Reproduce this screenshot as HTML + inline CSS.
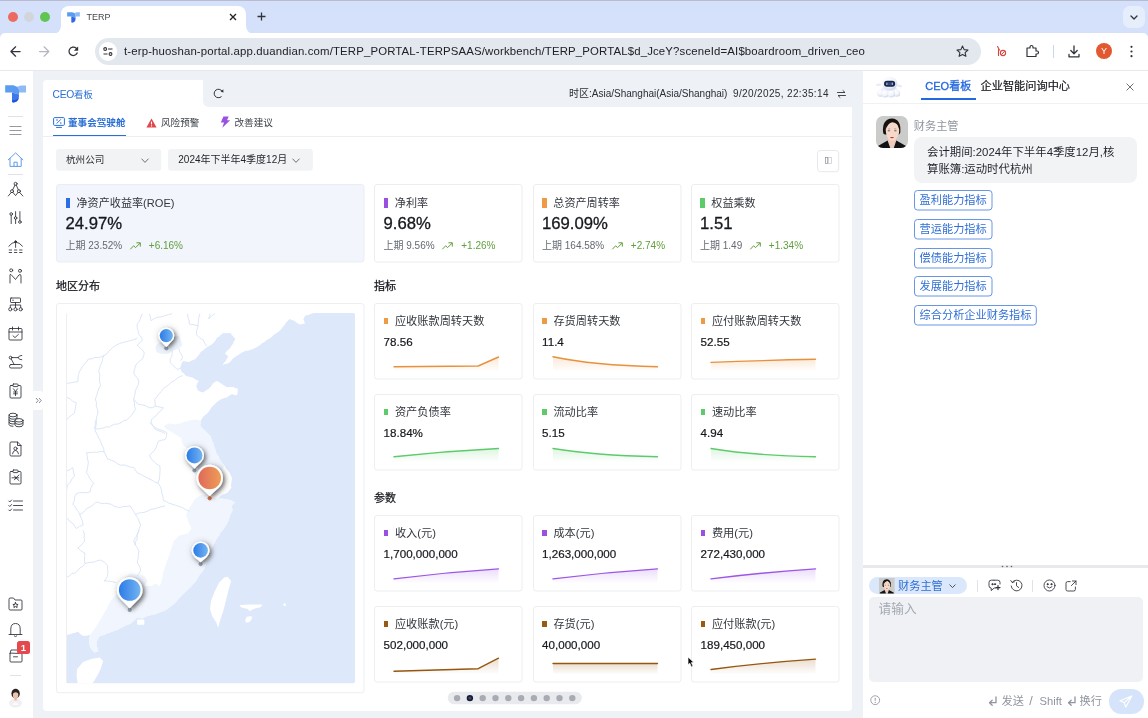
<!DOCTYPE html>
<html lang="zh-CN">
<head>
<meta charset="utf-8">
<title>TERP</title>
<style>
*{box-sizing:border-box;margin:0;padding:0}
html,body{width:1148px;height:718px;overflow:hidden;background:#fff}
body{font-family:"Liberation Sans","Noto Sans CJK SC",sans-serif;font-size:10px;color:#1f2329;position:relative;-webkit-font-smoothing:antialiased}
.abs{position:absolute}
svg{display:block;overflow:visible}
.ic{fill:none;stroke:#2b2f36;stroke-width:.85;stroke-linecap:round;stroke-linejoin:round}
/* browser chrome */
#tabbar{left:0;top:0;width:1148px;height:44px;background:#d5e1fb;border-top:1px solid #b9bccf}
#tab{left:60.7px;top:6px;width:185.3px;height:28px;background:#fff;border-radius:8px 8px 0 0}
#toolbar{left:0;top:33px;width:1148px;height:38px;background:#fff;border-bottom:1px solid #e6e8ec;border-radius:5px 5px 0 0}
#url{left:95px;top:38px;width:886px;height:27px;border-radius:14px;background:#e3e7ee}
#url span{position:absolute;left:29px;top:6.9px;font-size:11.4px;color:#202124;white-space:nowrap;letter-spacing:0.15px}
/* app */
#side{left:0;top:71px;width:33px;height:647px;background:#fff}
#mainbg{left:33px;top:71px;width:830px;height:647px;background:#eef1f6}
#panel{left:43px;top:107px;width:810px;height:603px;background:#fff;border-radius:0 0 4px 4px}
#ptab{left:43px;top:80px;width:160px;height:28px;background:#fff;border-radius:4px 4px 0 0}
#ptabrest{left:203px;top:80px;width:650px;height:27px;background:#f2f4f8;border-radius:0 4px 0 0}
.card{position:absolute;border:1px solid #ebedf0;border-radius:3px;background:#fff}
.t{position:absolute;white-space:nowrap;line-height:1}
.sel{position:absolute;height:22px;background:#f2f3f5;border-radius:3px}
.g{color:#5f9e3a}
.mut{color:#646a73}
#right{left:863px;top:70px;width:285px;height:648px;background:#fff;border-left:3px solid #eef1f6}
.chip{position:absolute;height:18px;border:1px solid transparent;border-radius:3px;color:#2f6fd6;font-size:11.2px;line-height:19.3px;padding:0 4.6px;white-space:nowrap}
.val{-webkit-text-stroke:.3px #15181d}
.mv{-webkit-text-stroke:.2px #15181d}
</style>
</head>
<body><div id="root" style="position:absolute;left:0;top:0;width:1148px;height:718px;will-change:transform">
<!-- ===== browser chrome ===== -->
<div id="tabbar" class="abs"></div>
<div id="tab" class="abs"></div>
<svg class="abs" style="left:52.7px;top:26px" width="8" height="8"><path d="M8,0 V8 H0 A8,8 0 0 0 8,0Z" fill="#fff"/></svg>
<svg class="abs" style="left:246px;top:26px" width="8" height="8"><path d="M0,0 V8 H8 A8,8 0 0 1 0,0Z" fill="#fff"/></svg>
<div class="abs" style="left:8px;top:12px;width:10px;height:10px;border-radius:50%;background:#ed6a5e"></div>
<div class="abs" style="left:24px;top:12px;width:10px;height:10px;border-radius:50%;background:#d2d5db"></div>
<div class="abs" style="left:40px;top:12px;width:10px;height:10px;border-radius:50%;background:#61c554"></div>
<svg class="abs" style="left:66.5px;top:12px" width="13.2" height="11" viewBox="0 0 21.5 18"><path d="M0.2,0.3 H8.5 L12,1.8 Q14,2.6 14,5 V9.5 L7,7.4 H0.2Z" fill="#5b9cf1"/><path d="M12,1.8 L16,0.5 H21 V7.4 H14 V5 Q14,2.6 12,1.8Z" fill="#8ebaf6"/><path d="M7,7.4 L14,9.5 V11 Q14,17 8.5,17.5 Q7,17.5 7,16.5Z" fill="#2f68e6"/></svg>
<div class="t" style="left:86.5px;top:12.8px;font-size:9px;color:#45484d">TERP</div>
<svg class="abs" style="left:229px;top:13px" width="8" height="8"><path d="M1,1 L7,7 M7,1 L1,7" stroke="#202124" stroke-width="1.3" fill="none"/></svg>
<svg class="abs" style="left:257px;top:12px" width="9" height="9"><path d="M4.5,0.5 V8.5 M0.5,4.5 H8.5" stroke="#30343a" stroke-width="1.3" fill="none"/></svg>
<div class="abs" style="left:1123px;top:6.3px;width:21.8px;height:21.8px;border-radius:7px;background:#e6eefc"></div>
<svg class="abs" style="left:1130px;top:14.5px" width="8" height="6"><path d="M1,1 L4,4 L7,1" stroke="#30343a" stroke-width="1.3" fill="none" stroke-linecap="round" stroke-linejoin="round"/></svg>
<div id="toolbar" class="abs"></div>
<svg class="abs" style="left:10.3px;top:46px" width="11" height="11"><path d="M10.1,5.5 H1 M5.6,0.8 L0.9,5.5 L5.6,10.2" stroke="#30343a" stroke-width="1.25" fill="none" stroke-linecap="round" stroke-linejoin="round"/></svg>
<svg class="abs" style="left:38.6px;top:46px" width="11" height="11"><path d="M0.6,5.5 H9.7 M5.1,0.8 L9.8,5.5 L5.1,10.2" stroke="#b4b8be" stroke-width="1.25" fill="none" stroke-linecap="round" stroke-linejoin="round"/></svg>
<svg class="abs" style="left:66.1px;top:44.2px" width="14.6" height="14.6" viewBox="0 0 24 24"><path d="M17.65 6.35A7.958 7.958 0 0 0 12 4c-4.42 0-7.99 3.58-7.99 8s3.57 8 7.99 8c3.73 0 6.84-2.55 7.73-6h-2.08A5.99 5.99 0 0 1 12 18c-3.31 0-6-2.69-6-6s2.69-6 6-6c1.66 0 3.14.69 4.22 1.78L13 11h7V4l-2.35 2.35z" fill="#30343a"/></svg>
<div id="url" class="abs"><span>t-erp-huoshan-portal.app.duandian.com/TERP_PORTAL-TERPSAAS/workbench/TERP_PORTAL$d_JceY?sceneId=AI$boardroom_driven_ceo</span></div>
<div class="abs" style="left:98.6px;top:42.3px;width:18.4px;height:18.4px;border-radius:50%;background:#fff"></div>
<svg class="abs" style="left:103.2px;top:47px" width="10" height="9" viewBox="0 0 10 9"><circle cx="2.2" cy="2" r="1.4" fill="none" stroke="#30343a" stroke-width="1.1"/><path d="M5,2 H9.5 M0.5,7 H4.5" stroke="#30343a" stroke-width="1.1"/><circle cx="7.5" cy="7" r="1.4" fill="none" stroke="#30343a" stroke-width="1.1"/></svg>
<svg class="abs" style="left:956px;top:45px" width="13" height="12" viewBox="0 0 13 12"><path d="M6.5,1 L8.1,4.6 L12,5 L9.1,7.6 L9.9,11.3 L6.5,9.4 L3.1,11.3 L3.9,7.6 L1,5 L4.9,4.6Z" fill="none" stroke="#30343a" stroke-width="1.1" stroke-linejoin="round"/></svg>
<svg class="abs" style="left:996px;top:45px" width="12" height="12" viewBox="0 0 12 12"><path d="M1.5,1.5 L3.5,5 M2.5,4.5 V10.5" stroke="#d8453a" stroke-width="1.1" fill="none" stroke-linecap="round"/><circle cx="7" cy="8" r="2.6" fill="none" stroke="#d8453a" stroke-width="1.1"/><path d="M5.3,9.7 L8.7,6.3" stroke="#d8453a" stroke-width="1"/></svg>
<svg class="abs" style="left:1025px;top:44px" width="14" height="14" viewBox="0 0 14 14"><path d="M2,4 H5 V3 A1.5,1.5 0 0 1 8,3 V4 H11 V7 H12 A1.5,1.5 0 0 1 12,10 H11 V12.5 H2Z" fill="none" stroke="#30343a" stroke-width="1.2" stroke-linejoin="round"/></svg>
<div class="abs" style="left:1053px;top:45px;width:1px;height:13px;background:#c9d6f2"></div>
<svg class="abs" style="left:1068px;top:45px" width="12" height="13" viewBox="0 0 12 13"><path d="M6,1 V8.5 M2.8,5.5 L6,8.7 L9.2,5.5 M1,9.5 V11.8 H11 V9.5" fill="none" stroke="#30343a" stroke-width="1.3" stroke-linecap="round" stroke-linejoin="round"/></svg>
<div class="abs" style="left:1096px;top:43px;width:16px;height:16px;border-radius:50%;background:#e2582f;color:#fff;font-size:9px;text-align:center;line-height:16px">Y</div>
<svg class="abs" style="left:1130px;top:45px" width="3" height="13"><circle cx="1.5" cy="1.8" r="1.1" fill="#30343a"/><circle cx="1.5" cy="6.5" r="1.1" fill="#30343a"/><circle cx="1.5" cy="11.2" r="1.1" fill="#30343a"/></svg>
<!-- ===== app sidebar ===== -->
<div id="mainbg" class="abs"></div>
<div id="side" class="abs"></div>
<svg class="abs" style="left:5px;top:85px" width="21.5" height="18" viewBox="0 0 21.5 18"><path d="M0.2,0.3 H8.5 L12,1.8 Q14,2.6 14,5 V9.5 L7,7.4 H0.2Z" fill="#5b9cf1"/><path d="M12,1.8 L16,0.5 H21 V7.4 H14 V5 Q14,2.6 12,1.8Z" fill="#8ebaf6"/><path d="M7,7.4 L14,9.5 V11 Q14,17 8.5,17.5 Q7,17.5 7,16.5Z" fill="#3f78ea"/><path d="M7,15.2 Q11,15.6 13.6,13 Q12.5,17.2 8.5,17.5 Q7,17.5 7,16.5Z" fill="#1d55dd"/></svg>
<div class="abs" style="left:8px;top:116px;width:15px;height:1px;background:#dfe2e7"></div>
<svg class="abs" style="left:9px;top:125px" width="13" height="11"><path d="M0.5,1.5 H12.5 M0.5,5.5 H12.5 M0.5,9.5 H12.5" stroke="#8a8f98" stroke-width=".9" fill="none"/></svg>
<svg class="abs ic" style="left:7px;top:151px;stroke:#5b97ea;stroke-width:.95" width="17" height="17" viewBox="0 0 17 17"><path d="M1.3,8.8 L8.6,1.9 L15.9,8.8 M3,7.4 V15.4 H14.2 V7.4 M7,15.4 V11.2 H10.2 V15.4"/></svg>
<div class="abs" style="left:8px;top:174px;width:15px;height:1px;background:#dfe2e7"></div>
<!-- group -->
<svg class="abs ic" style="left:7px;top:181px" width="17" height="17" viewBox="0 0 17 17"><circle cx="8.6" cy="2.8" r="1.5"/><circle cx="5" cy="10.2" r="1.5"/><circle cx="11.9" cy="10.2" r="1.5"/><path d="M7.9,4.2 L5.7,8.8 M9.3,4.2 L11.3,8.8 M4.2,11.5 L1.3,15 M12.7,11.5 L15.9,15 M5.9,11.4 L8.6,14.6 L11,11.4"/></svg>
<!-- sliders -->
<svg class="abs ic" style="left:8px;top:210px" width="15" height="16" viewBox="0 0 15 16"><path d="M3.2,5.3 V13.6 M7.6,1.6 V6.7 M7.6,9.3 V13.6 M11.9,1.6 V10.7"/><circle cx="3.2" cy="4" r="1.3"/><circle cx="7.6" cy="8" r="1.3"/><circle cx="11.9" cy="12" r="1.3"/></svg>
<!-- umbrella -->
<svg class="abs ic" style="left:8px;top:239px" width="15" height="15" viewBox="0 0 15 15"><path d="M0.8,7.2 Q7.6,-1.2 14.5,7.2 M7.6,2.7 V8.4"/><circle cx="7.6" cy="2.6" r="0.9" fill="#2b2f36"/><path d="M0.8,11 H14.5 M0.8,13.5 H14.5" stroke-dasharray="3.2 2" stroke-linecap="butt"/></svg>
<!-- people M -->
<svg class="abs ic" style="left:8px;top:268px" width="15" height="16" viewBox="0 0 15 16"><circle cx="3.2" cy="2.3" r="1.5"/><circle cx="12" cy="2.8" r="1.5"/><path d="M2,15 V7 Q2,6 3,6.5 L7.5,11.5 L11,6.8 Q13,6 13,8 V15"/></svg>
<!-- org -->
<svg class="abs ic" style="left:8px;top:297px" width="15" height="15" viewBox="0 0 15 15"><rect x="2.5" y="1" width="10" height="4.5" rx=".6"/><path d="M4.6,3.2 H5.4 M7.5,5.5 V8 M2.3,10.5 V8 H12.7 V10.5 M7.5,8 V10.5"/><circle cx="2.3" cy="12.3" r="1.6"/><circle cx="7.5" cy="12.3" r="1.6"/><circle cx="12.7" cy="12.3" r="1.6"/></svg>
<!-- calendar -->
<svg class="abs ic" style="left:8px;top:326px" width="15" height="15" viewBox="0 0 15 15"><rect x="1" y="2.5" width="13" height="11.5" rx="1"/><path d="M1,6 H14 M4.5,1 V4 M10.5,1 V4 M5,9.8 L7,11.6 L10.4,8.4"/></svg>
<!-- robot arm -->
<svg class="abs ic" style="left:8px;top:354px" width="15" height="15" viewBox="0 0 15 15"><circle cx="2.6" cy="3.6" r="1.4"/><path d="M4,3.6 H10 M10,3.6 Q11,1.2 13.8,1.4 M10,3.6 Q11,6 13.8,5.8 M3.2,5 L6.2,10.5"/><rect x="1.5" y="10.5" width="12.5" height="3.5" rx="1.5"/></svg>
<!-- clipboard yen -->
<svg class="abs ic" style="left:9px;top:383px" width="13" height="16" viewBox="0 0 13 16"><rect x="1" y="2.5" width="11" height="12.5" rx="1"/><rect x="4" y="1" width="5" height="2.6" rx=".6" fill="#fff"/><path d="M4.5,5.8 L6.5,8.5 L8.5,5.8 M6.5,8.5 V12.6 M4.6,9 H8.4 M4.6,10.8 H8.4"/></svg>
<!-- collapse handle -->
<div class="abs" style="left:33px;top:391px;width:10px;height:19px;background:#fff;border-radius:0 3px 3px 0"></div>
<svg class="abs" style="left:35px;top:397px" width="7" height="7"><path d="M1,1 L3.2,3.5 L1,6 M4,1 L6.2,3.5 L4,6" stroke="#6b7079" stroke-width=".8" fill="none"/></svg>
<!-- coins -->
<svg class="abs ic" style="left:8px;top:412px" width="16" height="16" viewBox="0 0 16 16"><ellipse cx="5" cy="3" rx="4" ry="1.8"/><path d="M1,3 V12.5 Q1,14.3 5,14.3 M9,3 V6.5 M1,5.4 Q1,7.2 5,7.2 Q7.5,7.2 8.6,6.2 M1,7.8 Q1,9.6 5,9.6 Q6,9.6 6.8,9.4 M1,10.2 Q1,12 5,12 Q6,12 6.8,11.8"/><ellipse cx="11" cy="8.3" rx="4" ry="1.7"/><path d="M7,8.3 V13 Q7,14.8 11,14.8 Q15,14.8 15,13 V8.3 M7,10.6 Q7,12.4 11,12.4 Q15,12.4 15,10.6"/></svg>
<!-- file user -->
<svg class="abs ic" style="left:9px;top:441px" width="13" height="16" viewBox="0 0 13 16"><path d="M1,2 Q1,1 2,1 H8.5 L12,4.5 V14 Q12,15 11,15 H2 Q1,15 1,14Z M8.5,1 V4.5 H12"/><circle cx="6.5" cy="7.6" r="1.6"/><path d="M3.5,12.8 Q4,9.6 6.5,9.4 Q9,9.6 9.5,12.8"/></svg>
<!-- clipboard scissors -->
<svg class="abs ic" style="left:9px;top:469px" width="13" height="16" viewBox="0 0 13 16"><rect x="1" y="2.5" width="11" height="12.5" rx="1"/><rect x="4" y="1" width="5" height="2.6" rx=".6" fill="#fff"/><path d="M3,8.8 H7 M7,8.8 L10,6 M7,8.8 L10,11.6 M7,8.8 L9.8,8.8 M5.5,7 L7,8.8 L5.5,10.8"/></svg>
<!-- checklist -->
<svg class="abs ic" style="left:8px;top:499px" width="15" height="13" viewBox="0 0 15 13"><path d="M5.5,2 H14.5 M5.5,6.5 H14.5 M5.5,11 H14.5"/><path d="M0.8,2 L1.8,3 L3.6,1 M0.8,6.5 L1.8,7.5 L3.6,5.5 M0.8,11 L1.8,12 L3.6,10"/></svg>
<!-- folder star -->
<svg class="abs ic" style="left:8px;top:597px" width="15" height="14" viewBox="0 0 15 14"><path d="M1,2 Q1,1 2,1 H5.5 L7,3 H13 Q14,3 14,4 V12 Q14,13 13,13 H2 Q1,13 1,12Z"/><path d="M7.5,5.6 L8.3,7.3 L10.1,7.5 L8.8,8.7 L9.1,10.5 L7.5,9.6 L5.9,10.5 L6.2,8.7 L4.9,7.5 L6.7,7.3Z" stroke-width=".9"/></svg>
<!-- bell -->
<svg class="abs ic" style="left:8px;top:622px" width="15" height="16" viewBox="0 0 15 16"><path d="M1,12.5 H14 M2.8,12.5 V7 Q2.8,1.5 7.5,1.5 Q12.2,1.5 12.2,7 V12.5 M6.2,14 Q7.5,15.4 8.8,14"/></svg>
<!-- box + badge -->
<svg class="abs ic" style="left:9px;top:649px" width="14" height="14" viewBox="0 0 14 14"><path d="M1,4.5 L2,1 H9 M1,4.5 V12 Q1,13 2,13 H12 Q13,13 13,12 V5.5 Q13,4.5 12,4.5Z M4.5,7.8 H8.5"/></svg>
<div class="abs" style="left:17px;top:641px;width:13px;height:13px;border-radius:2.5px;background:#e5484d;color:#fff;font-size:9.5px;font-weight:bold;text-align:center;line-height:13px">1</div>
<div class="abs" style="left:10px;top:675px;width:11px;height:1px;background:#dfe2e7"></div>
<!-- avatar small -->
<svg class="abs" style="left:8px;top:687px" width="15" height="19" viewBox="0 0 15 19"><ellipse cx="7.5" cy="16" rx="6.5" ry="4.5" fill="#f1eff2"/><path d="M4.2,18 Q7.5,12.5 10.8,18Z" fill="#fbfbfc"/><ellipse cx="7.6" cy="6.6" rx="4.2" ry="4.9" fill="#2a2422"/><ellipse cx="7.6" cy="8" rx="2.7" ry="3.6" fill="#eec4ae"/><rect x="6.5" y="11" width="2.2" height="2.5" fill="#e8b9a2"/><path d="M4.6,6.8 Q7,3.6 10.6,6.6 Q10,3 7.5,2.8 Q4.8,3 4.6,6.8Z" fill="#2a2422"/></svg>
<!-- ===== main panel ===== -->
<div class="abs" style="left:43px;top:80px;width:809.3px;height:630.8px;background:#fff;border-radius:4px"></div>
<div class="abs" style="left:203.3px;top:80px;width:649px;height:27px;background:#eef1f6;border-radius:0 0 0 6px"></div>
<div class="t" style="left:52.5px;top:89.6px;font-size:9.4px;color:#2b6fd6"><span style="font-size:10.3px;letter-spacing:-.25px">CEO</span>看板</div>
<svg class="abs" style="left:213.15px;top:88.25px" width="11" height="11" viewBox="0 0 11 11"><path d="M9.02,3.03 A4.3,4.3 0 1 0 8.26,8.79" stroke="#30343a" stroke-width="1" fill="none" stroke-linecap="round"/><path d="M7.7,3.7 L10.3,1.3 L10.5,4.5Z" fill="#30343a"/></svg>
<div class="t" style="left:569px;top:89px;font-size:10px;color:#2a2e35">时区:Asia/Shanghai(Asia/Shanghai)</div>
<div class="t" style="left:733px;top:89px;font-size:10px;letter-spacing:.36px;color:#2a2e35">9/20/2025, 22:35:14</div>
<svg class="abs" style="left:837px;top:90px" width="9" height="8" viewBox="0 0 9 8"><path d="M0.5,2.5 H8 L6,0.6 M8.5,5.5 H1 L3,7.4" stroke="#30343a" stroke-width=".9" fill="none" stroke-linecap="round" stroke-linejoin="round"/></svg>
<!-- sub tabs -->
<svg class="abs" style="left:53px;top:117px" width="12" height="11" viewBox="0 0 12 11"><rect x=".6" y=".6" width="10.8" height="7.8" rx="1" fill="none" stroke="#2b6fd6" stroke-width="1"/><path d="M3.5,10.4 H8.5 M4,6.2 L7.6,2.6" stroke="#2b6fd6" stroke-width="1" fill="none" stroke-linecap="round"/><circle cx="4" cy="3" r=".8" fill="#2b6fd6"/><circle cx="7.8" cy="6" r=".8" fill="#2b6fd6"/></svg>
<div class="t" style="left:68px;top:117.7px;font-size:9.6px;font-weight:bold;color:#2b6fd6">董事会驾驶舱</div>
<div class="abs" style="left:43px;top:135.5px;width:809.3px;height:1px;background:#eceef2"></div>
<div class="abs" style="left:52.5px;top:134.6px;width:73.5px;height:1.8px;background:#2b6fd6"></div>
<svg class="abs" style="left:146px;top:118px" width="11" height="10" viewBox="0 0 11 10"><path d="M5.5,0.6 L10.6,9.4 H0.4Z" fill="#e0474c"/><path d="M5.5,3.6 V6.4" stroke="#fff" stroke-width="1.1"/><circle cx="5.5" cy="7.9" r=".65" fill="#fff"/></svg>
<div class="t" style="left:161px;top:117.7px;font-size:9.6px;color:#3d4249">风险预警</div>
<svg class="abs" style="left:220.2px;top:116.2px" width="10.6" height="12.2" viewBox="0 0 10 11"><path d="M3.2,0.3 H8.2 L6.6,3.8 H9.6 L2.2,10.8 L3.8,6 H0.8Z" fill="#9b51e0"/></svg>
<div class="t" style="left:234.5px;top:117.7px;font-size:9.6px;color:#3d4249">改善建议</div>
<!-- selects -->
<svg class="abs" style="left:55.7px;top:149.4px" width="105.3" height="21.8"><rect width="105.3" height="21.8" rx="3" fill="#f2f3f5"/></svg>
<div class="t" style="left:66px;top:155.4px;font-size:9.6px;color:#2a2e35">杭州公司</div>
<svg class="abs" style="left:140.5px;top:157.5px" width="8" height="6"><path d="M0.8,1 L4,4.4 L7.2,1" stroke="#5c6169" stroke-width=".9" fill="none" stroke-linecap="round" stroke-linejoin="round"/></svg>
<svg class="abs" style="left:167.5px;top:149.4px" width="144.8" height="21.8"><rect width="144.8" height="21.8" rx="3" fill="#f2f3f5"/></svg>
<div class="t" style="left:178.3px;top:155.2px;font-size:10px;color:#1f2329">2024年下半年4季度12月</div>
<svg class="abs" style="left:291.5px;top:157.5px" width="8" height="6"><path d="M0.8,1 L4,4.4 L7.2,1" stroke="#5c6169" stroke-width=".9" fill="none" stroke-linecap="round" stroke-linejoin="round"/></svg>
<svg class="abs" style="left:817.4px;top:149.5px" width="22.2" height="22.2"><rect x=".5" y=".5" width="21.2" height="21.2" rx="3" fill="#fff" stroke="#e6e8ec"/></svg>
<svg class="abs" style="left:825px;top:157.2px" width="7" height="7"><rect x=".5" y=".5" width="2.2" height="6" fill="none" stroke="#8c919a" stroke-width=".7"/><rect x="3.4" y=".5" width="3" height="6" fill="none" stroke="#c3c7ce" stroke-width=".7"/></svg>
<!-- KPI cards -->
<svg class="abs" style="left:56px;top:184px" width="308.5" height="78.5"><rect x=".5" y=".5" width="307.5" height="77.5" rx="2.5" fill="#f2f5fb" stroke="#e9edf5"/></svg>
<div class="abs" style="left:65.5px;top:197.5px;width:4.5px;height:10.5px;background:#2b6de5"></div>
<div class="t" style="left:76.5px;top:197.8px;font-size:11.1px;color:#33373e">净资产收益率(ROE)</div>
<div class="t val" style="left:65.5px;top:215.6px;font-size:16.7px;color:#15181d">24.97%</div>
<div class="t" style="left:65.5px;top:241.2px;font-size:10px;color:#646a73">上期 23.52%<svg style="display:inline-block;vertical-align:-0.5px;margin:0 7.8px 0 7.8px" width="11" height="8" viewBox="0 0 11 8"><path d="M0.6,7 L3.6,3.8 L5.6,5.6 L10,1.2 M6.8,0.8 H10.3 V4.2" stroke="#5f9e3a" stroke-width="1" fill="none" stroke-linecap="round" stroke-linejoin="round"/></svg><span class="g">+6.16%</span></div>
<svg class="abs" style="left:374px;top:184px" width="148.5" height="78.5"><rect x=".5" y=".5" width="147.5" height="77.5" rx="2.5" fill="#fff" stroke="#ebedf0"/></svg>
<div class="abs" style="left:383.5px;top:197.5px;width:4.5px;height:10.5px;background:#9b51e0"></div>
<div class="t" style="left:394.8px;top:197.8px;font-size:11.1px;color:#33373e">净利率</div>
<div class="t val" style="left:383.5px;top:215.6px;font-size:16.7px;color:#15181d">9.68%</div>
<div class="t" style="left:383.5px;top:241.2px;font-size:10px;color:#646a73">上期 9.56%<svg style="display:inline-block;vertical-align:-0.5px;margin:0 7.8px 0 7.8px" width="11" height="8" viewBox="0 0 11 8"><path d="M0.6,7 L3.6,3.8 L5.6,5.6 L10,1.2 M6.8,0.8 H10.3 V4.2" stroke="#5f9e3a" stroke-width="1" fill="none" stroke-linecap="round" stroke-linejoin="round"/></svg><span class="g">+1.26%</span></div>
<svg class="abs" style="left:532.5px;top:184px" width="148.5" height="78.5"><rect x=".5" y=".5" width="147.5" height="77.5" rx="2.5" fill="#fff" stroke="#ebedf0"/></svg>
<div class="abs" style="left:542px;top:197.5px;width:4.5px;height:10.5px;background:#ef9a45"></div>
<div class="t" style="left:553.3px;top:197.8px;font-size:11.1px;color:#33373e">总资产周转率</div>
<div class="t val" style="left:542px;top:215.6px;font-size:16.7px;color:#15181d">169.09%</div>
<div class="t" style="left:542px;top:241.2px;font-size:10px;color:#646a73">上期 164.58%<svg style="display:inline-block;vertical-align:-0.5px;margin:0 7.8px 0 7.8px" width="11" height="8" viewBox="0 0 11 8"><path d="M0.6,7 L3.6,3.8 L5.6,5.6 L10,1.2 M6.8,0.8 H10.3 V4.2" stroke="#5f9e3a" stroke-width="1" fill="none" stroke-linecap="round" stroke-linejoin="round"/></svg><span class="g">+2.74%</span></div>
<svg class="abs" style="left:691px;top:184px" width="148.5" height="78.5"><rect x=".5" y=".5" width="147.5" height="77.5" rx="2.5" fill="#fff" stroke="#ebedf0"/></svg>
<div class="abs" style="left:700px;top:197.5px;width:4.5px;height:10.5px;background:#5ecb6b"></div>
<div class="t" style="left:711.3px;top:197.8px;font-size:11.1px;color:#33373e">权益乘数</div>
<div class="t val" style="left:700px;top:215.6px;font-size:16.7px;color:#15181d">1.51</div>
<div class="t" style="left:700px;top:241.2px;font-size:10px;color:#646a73">上期 1.49<svg style="display:inline-block;vertical-align:-0.5px;margin:0 7.8px 0 7.8px" width="11" height="8" viewBox="0 0 11 8"><path d="M0.6,7 L3.6,3.8 L5.6,5.6 L10,1.2 M6.8,0.8 H10.3 V4.2" stroke="#5f9e3a" stroke-width="1" fill="none" stroke-linecap="round" stroke-linejoin="round"/></svg><span class="g">+1.34%</span></div>
<div class="t" style="left:56px;top:280.5px;font-size:11px;-webkit-text-stroke:.25px #15181d;color:#15181d" id="sec1">地区分布</div>
<div class="t" style="left:374px;top:280.5px;font-size:11px;-webkit-text-stroke:.25px #15181d;color:#15181d">指标</div>
<div class="t" style="left:374px;top:492.5px;font-size:11px;-webkit-text-stroke:.25px #15181d;color:#15181d">参数</div>
<!-- mini cards -->
<svg class="abs" style="left:374px;top:303px" width="148.5" height="76.5"><rect x=".5" y=".5" width="147.5" height="75.5" rx="2.5" fill="#fff" stroke="#eceef1"/></svg>
<div class="abs" style="left:383.8px;top:317.9px;width:4.3px;height:6.2px;background:#ef9a45"></div>
<div class="t" style="left:394.9px;top:315.7px;font-size:11.2px;color:#33373e">应收账款周转天数</div>
<div class="t mv" style="left:383.6px;top:335.8px;font-size:11.6px;color:#15181d">78.56</div>
<svg class="abs" style="left:394px;top:355.5px" width="104.5" height="16" viewBox="0 0 104.5 16"><defs><linearGradient id="g1" x1="0" y1="0" x2="0" y2="1"><stop offset="0" stop-color="#e8913c" stop-opacity=".2"/><stop offset="1" stop-color="#e8913c" stop-opacity="0"/></linearGradient></defs><path d="M0,10.8 L84.2,10 L104.5,1 L104.5,15.5 L0,15.5Z" fill="url(#g1)"/><path d="M0,10.8 L84.2,10 L104.5,1" fill="none" stroke="#e8913c" stroke-width="1.4" stroke-linecap="round" stroke-linejoin="round"/></svg>
<svg class="abs" style="left:532.5px;top:303px" width="148.5" height="76.5"><rect x=".5" y=".5" width="147.5" height="75.5" rx="2.5" fill="#fff" stroke="#eceef1"/></svg>
<div class="abs" style="left:542.3px;top:317.9px;width:4.3px;height:6.2px;background:#ef9a45"></div>
<div class="t" style="left:553.4px;top:315.7px;font-size:11.2px;color:#33373e">存货周转天数</div>
<div class="t mv" style="left:542.1px;top:335.8px;font-size:11.6px;color:#15181d">11.4</div>
<svg class="abs" style="left:552.5px;top:355.5px" width="104.5" height="16" viewBox="0 0 104.5 16"><defs><linearGradient id="g2" x1="0" y1="0" x2="0" y2="1"><stop offset="0" stop-color="#e8913c" stop-opacity=".2"/><stop offset="1" stop-color="#e8913c" stop-opacity="0"/></linearGradient></defs><path d="M0,0.8 Q40,9.3 104.5,10.8 L104.5,15.5 L0,15.5Z" fill="url(#g2)"/><path d="M0,0.8 Q40,9.3 104.5,10.8" fill="none" stroke="#e8913c" stroke-width="1.4" stroke-linecap="round" stroke-linejoin="round"/></svg>
<svg class="abs" style="left:691px;top:303px" width="148.5" height="76.5"><rect x=".5" y=".5" width="147.5" height="75.5" rx="2.5" fill="#fff" stroke="#eceef1"/></svg>
<div class="abs" style="left:700.8px;top:317.9px;width:4.3px;height:6.2px;background:#ef9a45"></div>
<div class="t" style="left:711.9px;top:315.7px;font-size:11.2px;color:#33373e">应付账款周转天数</div>
<div class="t mv" style="left:700.6px;top:335.8px;font-size:11.6px;color:#15181d">52.55</div>
<svg class="abs" style="left:711px;top:355.5px" width="104.5" height="16" viewBox="0 0 104.5 16"><defs><linearGradient id="g3" x1="0" y1="0" x2="0" y2="1"><stop offset="0" stop-color="#e8913c" stop-opacity=".2"/><stop offset="1" stop-color="#e8913c" stop-opacity="0"/></linearGradient></defs><path d="M0,6.4 Q52,4.4 104.5,3.3 L104.5,15.5 L0,15.5Z" fill="url(#g3)"/><path d="M0,6.4 Q52,4.4 104.5,3.3" fill="none" stroke="#e8913c" stroke-width="1.4" stroke-linecap="round" stroke-linejoin="round"/></svg>
<svg class="abs" style="left:374px;top:394px" width="148.5" height="76.5"><rect x=".5" y=".5" width="147.5" height="75.5" rx="2.5" fill="#fff" stroke="#eceef1"/></svg>
<div class="abs" style="left:383.8px;top:408.9px;width:4.3px;height:6.2px;background:#5ecb6b"></div>
<div class="t" style="left:394.9px;top:406.7px;font-size:11.2px;color:#33373e">资产负债率</div>
<div class="t mv" style="left:383.6px;top:426.8px;font-size:11.6px;color:#15181d">18.84%</div>
<svg class="abs" style="left:394px;top:446.5px" width="104.5" height="16" viewBox="0 0 104.5 16"><defs><linearGradient id="g4" x1="0" y1="0" x2="0" y2="1"><stop offset="0" stop-color="#5ecb6b" stop-opacity=".2"/><stop offset="1" stop-color="#5ecb6b" stop-opacity="0"/></linearGradient></defs><path d="M0,9.8 Q52,4.1 104.5,1.5 L104.5,15.5 L0,15.5Z" fill="url(#g4)"/><path d="M0,9.8 Q52,4.1 104.5,1.5" fill="none" stroke="#5ecb6b" stroke-width="1.4" stroke-linecap="round" stroke-linejoin="round"/></svg>
<svg class="abs" style="left:532.5px;top:394px" width="148.5" height="76.5"><rect x=".5" y=".5" width="147.5" height="75.5" rx="2.5" fill="#fff" stroke="#eceef1"/></svg>
<div class="abs" style="left:542.3px;top:408.9px;width:4.3px;height:6.2px;background:#5ecb6b"></div>
<div class="t" style="left:553.4px;top:406.7px;font-size:11.2px;color:#33373e">流动比率</div>
<div class="t mv" style="left:542.1px;top:426.8px;font-size:11.6px;color:#15181d">5.15</div>
<svg class="abs" style="left:552.5px;top:446.5px" width="104.5" height="16" viewBox="0 0 104.5 16"><defs><linearGradient id="g5" x1="0" y1="0" x2="0" y2="1"><stop offset="0" stop-color="#5ecb6b" stop-opacity=".2"/><stop offset="1" stop-color="#5ecb6b" stop-opacity="0"/></linearGradient></defs><path d="M0,1.5 Q40,8.3 104.5,9.8 L104.5,15.5 L0,15.5Z" fill="url(#g5)"/><path d="M0,1.5 Q40,8.3 104.5,9.8" fill="none" stroke="#5ecb6b" stroke-width="1.4" stroke-linecap="round" stroke-linejoin="round"/></svg>
<svg class="abs" style="left:691px;top:394px" width="148.5" height="76.5"><rect x=".5" y=".5" width="147.5" height="75.5" rx="2.5" fill="#fff" stroke="#eceef1"/></svg>
<div class="abs" style="left:700.8px;top:408.9px;width:4.3px;height:6.2px;background:#5ecb6b"></div>
<div class="t" style="left:711.9px;top:406.7px;font-size:11.2px;color:#33373e">速动比率</div>
<div class="t mv" style="left:700.6px;top:426.8px;font-size:11.6px;color:#15181d">4.94</div>
<svg class="abs" style="left:711px;top:446.5px" width="104.5" height="16" viewBox="0 0 104.5 16"><defs><linearGradient id="g6" x1="0" y1="0" x2="0" y2="1"><stop offset="0" stop-color="#5ecb6b" stop-opacity=".2"/><stop offset="1" stop-color="#5ecb6b" stop-opacity="0"/></linearGradient></defs><path d="M0,1.5 Q40,8.3 104.5,9.8 L104.5,15.5 L0,15.5Z" fill="url(#g6)"/><path d="M0,1.5 Q40,8.3 104.5,9.8" fill="none" stroke="#5ecb6b" stroke-width="1.4" stroke-linecap="round" stroke-linejoin="round"/></svg>
<svg class="abs" style="left:374px;top:515px" width="148.5" height="76.5"><rect x=".5" y=".5" width="147.5" height="75.5" rx="2.5" fill="#fff" stroke="#eceef1"/></svg>
<div class="abs" style="left:383.8px;top:529.9px;width:4.3px;height:6.2px;background:#9b51e0"></div>
<div class="t" style="left:394.9px;top:527.7px;font-size:11.2px;color:#33373e">收入(元)</div>
<div class="t mv" style="left:383.6px;top:547.8px;font-size:11.6px;color:#15181d">1,700,000,000</div>
<svg class="abs" style="left:394px;top:567.5px" width="104.5" height="16" viewBox="0 0 104.5 16"><defs><linearGradient id="g7" x1="0" y1="0" x2="0" y2="1"><stop offset="0" stop-color="#9c55e6" stop-opacity=".2"/><stop offset="1" stop-color="#9c55e6" stop-opacity="0"/></linearGradient></defs><path d="M0,10.9 Q52,4.3 104.5,0.9 L104.5,15.5 L0,15.5Z" fill="url(#g7)"/><path d="M0,10.9 Q52,4.3 104.5,0.9" fill="none" stroke="#9c55e6" stroke-width="1.4" stroke-linecap="round" stroke-linejoin="round"/></svg>
<svg class="abs" style="left:532.5px;top:515px" width="148.5" height="76.5"><rect x=".5" y=".5" width="147.5" height="75.5" rx="2.5" fill="#fff" stroke="#eceef1"/></svg>
<div class="abs" style="left:542.3px;top:529.9px;width:4.3px;height:6.2px;background:#9b51e0"></div>
<div class="t" style="left:553.4px;top:527.7px;font-size:11.2px;color:#33373e">成本(元)</div>
<div class="t mv" style="left:542.1px;top:547.8px;font-size:11.6px;color:#15181d">1,263,000,000</div>
<svg class="abs" style="left:552.5px;top:567.5px" width="104.5" height="16" viewBox="0 0 104.5 16"><defs><linearGradient id="g8" x1="0" y1="0" x2="0" y2="1"><stop offset="0" stop-color="#9c55e6" stop-opacity=".2"/><stop offset="1" stop-color="#9c55e6" stop-opacity="0"/></linearGradient></defs><path d="M0,10.9 Q52,4.3 104.5,0.9 L104.5,15.5 L0,15.5Z" fill="url(#g8)"/><path d="M0,10.9 Q52,4.3 104.5,0.9" fill="none" stroke="#9c55e6" stroke-width="1.4" stroke-linecap="round" stroke-linejoin="round"/></svg>
<svg class="abs" style="left:691px;top:515px" width="148.5" height="76.5"><rect x=".5" y=".5" width="147.5" height="75.5" rx="2.5" fill="#fff" stroke="#eceef1"/></svg>
<div class="abs" style="left:700.8px;top:529.9px;width:4.3px;height:6.2px;background:#9b51e0"></div>
<div class="t" style="left:711.9px;top:527.7px;font-size:11.2px;color:#33373e">费用(元)</div>
<div class="t mv" style="left:700.6px;top:547.8px;font-size:11.6px;color:#15181d">272,430,000</div>
<svg class="abs" style="left:711px;top:567.5px" width="104.5" height="16" viewBox="0 0 104.5 16"><defs><linearGradient id="g9" x1="0" y1="0" x2="0" y2="1"><stop offset="0" stop-color="#9c55e6" stop-opacity=".2"/><stop offset="1" stop-color="#9c55e6" stop-opacity="0"/></linearGradient></defs><path d="M0,10.9 Q52,4.3 104.5,0.9 L104.5,15.5 L0,15.5Z" fill="url(#g9)"/><path d="M0,10.9 Q52,4.3 104.5,0.9" fill="none" stroke="#9c55e6" stroke-width="1.4" stroke-linecap="round" stroke-linejoin="round"/></svg>
<svg class="abs" style="left:374px;top:606px" width="148.5" height="76.5"><rect x=".5" y=".5" width="147.5" height="75.5" rx="2.5" fill="#fff" stroke="#eceef1"/></svg>
<div class="abs" style="left:383.8px;top:620.9px;width:4.3px;height:6.2px;background:#9a5a14"></div>
<div class="t" style="left:394.9px;top:618.7px;font-size:11.2px;color:#33373e">应收账款(元)</div>
<div class="t mv" style="left:383.6px;top:638.8px;font-size:11.6px;color:#15181d">502,000,000</div>
<svg class="abs" style="left:394px;top:658.5px" width="104.5" height="16" viewBox="0 0 104.5 16"><defs><linearGradient id="g10" x1="0" y1="0" x2="0" y2="1"><stop offset="0" stop-color="#96560f" stop-opacity=".2"/><stop offset="1" stop-color="#96560f" stop-opacity="0"/></linearGradient></defs><path d="M0,12.3 L84.2,9.7 L104.5,-0.8 L104.5,15.5 L0,15.5Z" fill="url(#g10)"/><path d="M0,12.3 L84.2,9.7 L104.5,-0.8" fill="none" stroke="#96560f" stroke-width="1.4" stroke-linecap="round" stroke-linejoin="round"/></svg>
<svg class="abs" style="left:532.5px;top:606px" width="148.5" height="76.5"><rect x=".5" y=".5" width="147.5" height="75.5" rx="2.5" fill="#fff" stroke="#eceef1"/></svg>
<div class="abs" style="left:542.3px;top:620.9px;width:4.3px;height:6.2px;background:#9a5a14"></div>
<div class="t" style="left:553.4px;top:618.7px;font-size:11.2px;color:#33373e">存货(元)</div>
<div class="t mv" style="left:542.1px;top:638.8px;font-size:11.6px;color:#15181d">40,000,000</div>
<svg class="abs" style="left:552.5px;top:658.5px" width="104.5" height="16" viewBox="0 0 104.5 16"><defs><linearGradient id="g11" x1="0" y1="0" x2="0" y2="1"><stop offset="0" stop-color="#96560f" stop-opacity=".2"/><stop offset="1" stop-color="#96560f" stop-opacity="0"/></linearGradient></defs><path d="M0,4.5 L104.5,4.5 L104.5,15.5 L0,15.5Z" fill="url(#g11)"/><path d="M0,4.5 L104.5,4.5" fill="none" stroke="#96560f" stroke-width="1.4" stroke-linecap="round" stroke-linejoin="round"/></svg>
<svg class="abs" style="left:691px;top:606px" width="148.5" height="76.5"><rect x=".5" y=".5" width="147.5" height="75.5" rx="2.5" fill="#fff" stroke="#eceef1"/></svg>
<div class="abs" style="left:700.8px;top:620.9px;width:4.3px;height:6.2px;background:#9a5a14"></div>
<div class="t" style="left:711.9px;top:618.7px;font-size:11.2px;color:#33373e">应付账款(元)</div>
<div class="t mv" style="left:700.6px;top:638.8px;font-size:11.6px;color:#15181d">189,450,000</div>
<svg class="abs" style="left:711px;top:658.5px" width="104.5" height="16" viewBox="0 0 104.5 16"><defs><linearGradient id="g12" x1="0" y1="0" x2="0" y2="1"><stop offset="0" stop-color="#96560f" stop-opacity=".2"/><stop offset="1" stop-color="#96560f" stop-opacity="0"/></linearGradient></defs><path d="M0,10.5 Q52,3.7 104.5,0.1 L104.5,15.5 L0,15.5Z" fill="url(#g12)"/><path d="M0,10.5 Q52,3.7 104.5,0.1" fill="none" stroke="#96560f" stroke-width="1.4" stroke-linecap="round" stroke-linejoin="round"/></svg>
<svg class="abs" style="left:440px;top:685px" width="150" height="30" viewBox="440 685 150 30"><rect x="447.8" y="691.8" width="134" height="12.4" rx="6.2" fill="#e9eaee"/><circle cx="457.1" cy="698.1" r="3.2" fill="#a8abb4"/><circle cx="469.9" cy="698.1" r="3.2" fill="#141a33"/><circle cx="469.9" cy="698.1" r="1.7" fill="#3d4560"/><circle cx="482.7" cy="698.1" r="3.2" fill="#a8abb4"/><circle cx="495.5" cy="698.1" r="3.2" fill="#a8abb4"/><circle cx="508.3" cy="698.1" r="3.2" fill="#a8abb4"/><circle cx="521.1" cy="698.1" r="3.2" fill="#a8abb4"/><circle cx="533.9" cy="698.1" r="3.2" fill="#a8abb4"/><circle cx="546.7" cy="698.1" r="3.2" fill="#a8abb4"/><circle cx="559.5" cy="698.1" r="3.2" fill="#a8abb4"/><circle cx="572.3" cy="698.1" r="3.2" fill="#a8abb4"/></svg>
<!-- ===== map ===== -->
<svg class="abs" style="left:56px;top:303px" width="308.5" height="390.2"><rect x=".5" y=".5" width="307.5" height="389.2" rx="2.5" fill="#fff" stroke="#eceef1"/></svg>
<svg class="abs" style="left:65.5px;top:312.5px" width="289" height="370.2" viewBox="65.5 312.5 289 370.2">
<defs>
<clipPath id="mc"><rect x="65.5" y="312.5" width="289" height="370.2" rx="2"/></clipPath>
<linearGradient id="gb" x1="0" y1="0" x2="1" y2="0"><stop offset="0" stop-color="#2c7be8"/><stop offset="1" stop-color="#74b4f1"/></linearGradient>
<linearGradient id="go" x1="0" y1="0" x2="1" y2="0"><stop offset="0" stop-color="#df6a5b"/><stop offset="1" stop-color="#ee9d55"/></linearGradient>
<filter id="ps" x="-80%" y="-80%" width="260%" height="260%"><feGaussianBlur in="SourceAlpha" stdDeviation="4.5" result="b1"/><feOffset in="b1" dx="1" dy="1" result="o1"/><feComponentTransfer in="o1" result="s1"><feFuncA type="linear" slope=".22"/></feComponentTransfer><feGaussianBlur in="SourceAlpha" stdDeviation="2" result="b2"/><feOffset in="b2" dx="1.8" dy="2" result="o2"/><feComponentTransfer in="o2" result="s2"><feFuncA type="linear" slope=".5"/></feComponentTransfer><feMerge><feMergeNode in="s1"/><feMergeNode in="s2"/><feMergeNode in="SourceGraphic"/></feMerge></filter>
</defs>
<g clip-path="url(#mc)">
<rect x="65.5" y="312.5" width="289" height="371" fill="#dde8fa"/>
<path d="M60,305 L313.3,305 L313.3,312.6 L310.4,313.6 L307.6,314.6 L304.6,315.2 L302.9,318.7 L304.6,323.1 L302.0,323.4 L299.4,323.9 L296.5,322.5 L294.1,320.5 L291.5,319.4 L288.9,318.4 L287.2,320.4 L285.4,322.2 L284.0,324.8 L281.9,326.9 L280.2,329.2 L278.1,331.3 L275.6,332.7 L273.2,334.4 L271.1,336.4 L268.8,338.2 L266.3,339.6 L264.0,341.4 L261.5,342.8 L259.3,344.8 L256.6,346.6 L253.6,348.0 L250.6,349.2 L247.7,350.0 L244.7,350.5 L241.9,351.8 L239.5,353.2 L237.3,354.8 L234.9,356.2 L232.0,358.5 L229.7,361.4 L227.2,362.9 L224.3,363.4 L221.8,364.9 L223.4,362.6 L225.3,360.5 L226.3,358.2 L227.9,356.2 L224.5,352.7 L226.9,349.9 L229.7,347.5 L230.9,345.2 L232.5,343.2 L233.4,340.8 L234.9,338.7 L233.2,336.6 L231.5,334.6 L229.7,332.6 L226.2,332.7 L222.7,332.6 L220.6,334.0 L218.9,335.9 L216.6,337.0 L214.8,340.3 L212.3,343.1 L210.1,344.8 L207.5,345.9 L205.3,347.5 L202.7,349.7 L200.1,351.8 L198.5,354.2 L196.5,356.4 L194.8,358.8 L191.4,360.1 L187.9,361.4 L185.2,361.1 L182.6,360.5 L181.1,363.0 L180.0,365.7 L180.3,368.4 L180.9,371.0 L183.3,373.0 L185.3,375.3 L188.7,376.3 L192.2,377.1 L195.2,378.9 L198.3,380.6 L196.7,383.0 L195.7,385.8 L197.5,390.1 L200.0,391.2 L202.7,391.9 L205.2,390.0 L207.9,388.4 L210.4,386.1 L212.3,383.2 L214.3,381.6 L216.6,380.6 L218.8,381.8 L221.0,383.2 L223.5,385.1 L226.2,386.7 L229.7,386.4 L233.2,386.7 L237.5,388.4 L237.1,391.5 L236.7,394.5 L234.0,394.5 L231.4,393.6 L228.7,395.2 L226.2,397.1 L223.1,397.8 L220.1,398.9 L218.0,400.6 L215.8,402.1 L214.0,404.1 L210.5,407.6 L208.9,410.3 L207.0,412.8 L204.7,414.4 L202.7,416.3 L200.4,420.1 L200.6,420.0 L200.1,422.6 L199.7,425.2 L202.2,427.9 L204.9,430.5 L207.5,433.1 L210.1,435.7 L211.2,439.3 L212.8,442.6 L213.3,445.6 L214.6,448.5 L215.4,451.4 L216.4,453.8 L218.1,455.8 L218.9,458.3 L220.5,460.7 L222.3,463.0 L224.1,465.3 L225.5,467.9 L227.3,470.1 L229.3,472.3 L230.3,474.8 L231.0,477.5 L228.4,481.0 L229.8,484.0 L231.0,487.1 L229.2,489.2 L227.6,491.4 L225.5,493.0 L222.9,493.8 L220.6,494.9 L217.1,498.4 L220.6,498.1 L224.1,498.4 L227.6,498.9 L231.0,500.1 L234.5,501.9 L231.0,505.4 L231.8,507.9 L231.9,510.6 L230.4,513.1 L229.3,515.8 L228.3,519.4 L226.7,522.8 L225.3,525.3 L223.6,527.7 L222.0,530.0 L220.0,532.1 L218.8,534.9 L216.8,537.0 L215.7,539.3 L214.4,541.6 L213.3,543.9 L211.8,546.7 L210.7,549.6 L209.8,552.6 L208.3,555.4 L207.7,558.5 L206.3,561.4 L205.2,564.3 L204.2,567.2 L202.9,570.1 L200.9,572.2 L199.0,574.4 L197.6,577.0 L196.1,579.5 L194.4,581.8 L192.4,584.0 L190.2,586.5 L187.9,588.8 L185.4,591.0 L183.1,593.3 L180.7,595.5 L178.5,597.9 L176.3,600.4 L174.1,602.9 L171.5,604.9 L169.2,606.7 L166.9,608.5 L164.5,610.1 L161.6,611.2 L158.5,612.1 L155.8,613.6 L152.9,614.0 L150.0,614.8 L147.1,615.4 L144.5,616.6 L141.9,618.0 L139.3,617.4 L136.7,617.1 L133.2,620.6 L130.8,622.7 L127.9,624.1 L125.1,625.1 L122.6,626.5 L119.9,627.7 L117.5,629.3 L114.8,629.9 L112.3,631.1 L109.7,632.0 L107.0,632.8 L104.2,634.3 L101.2,635.0 L98.3,636.3 L97.4,639.1 L95.7,641.5 L96.5,644.0 L96.6,646.7 L97.5,651.1 L94.0,652.0 L91.6,649.5 L89.6,646.7 L88.8,643.3 L88.7,639.8 L89.0,637.1 L89.6,634.5 L86.2,635.3 L82.6,635.4 L79.7,633.5 L77.4,631.0 L74.9,632.2 L72.2,632.8 L68.8,634.0 L65.2,634.5 L60,634.5Z" fill="#fff"/>
<path d="M227.2,576.2 L230.7,580.5 L228.1,589.2 L225.5,599.7 L222.9,610.1 L219.4,620.6 L217.7,627.6 L215.9,622.3 L211.6,615.4 L209.5,608.4 L210.7,599.7 L214.2,591.0 L218.5,582.3 L223.8,577.0Z" fill="#fff"/>
<rect x="136.6" y="619" width="7.2" height="5.2" rx="1" fill="#fff"/>
<path d="M239.4,604.6 L249.9,604.0 L260.0,603.9 L262.1,604.6 L260.0,606.7 L253.4,608.4 L249.0,610.5 L247.3,608.4 L242.9,607.5 L240.3,606.7Z" fill="#fff"/>
<path d="M246.4,616.2 L250.8,615.4 L251.6,618.0 L249.0,621.5 L245.5,622.3 L244.7,619.2Z" fill="#fff"/>
<rect x="283" y="603" width="2.4" height="2.4" fill="#fff"/>
<path d="M76.6,668.4 L82.6,661.4 L91.4,658.3 L99.2,657.1 L102.7,660.6 L100.1,668.4 L96.6,675.4 L91.4,684.1 L77.4,684.1 L76.0,675.4Z" fill="#fff"/>
<path d="M217.1,498.4 L205,494 L199.7,495 L194.5,498.4 L189.2,507 L185.7,514 L187.5,521 L191,528 L187.5,533 L178.8,535 L173.2,540.5 L169.8,550.9 L166.3,561.4 L162.8,571.8 L161,581.4 L159.3,585.7 L155,583 L150.6,585.7 L143.6,585.7 L147.1,580.5 L143.6,575.3 L129.7,572.7 L121,580 L115.7,594.5 L110.5,599.7 L107,606.7 L100,618.9 L94.8,627.6 L89.6,634.5 L89.0,637.1 L88.7,639.8 L88.8,643.3 L89.6,646.7 L91.6,649.5 L94.0,652.0 L97.5,651.1 L96.6,646.7 L96.5,644.0 L95.7,641.5 L97.4,639.1 L98.3,636.3 L101.2,635.0 L104.2,634.3 L107.0,632.8 L109.7,632.0 L112.3,631.1 L114.8,629.9 L117.5,629.3 L119.9,627.7 L122.6,626.5 L125.1,625.1 L127.9,624.1 L130.8,622.7 L133.2,620.6 L136.7,617.1 L139.3,617.4 L141.9,618.0 L144.5,616.6 L147.1,615.4 L150.0,614.8 L152.9,614.0 L155.8,613.6 L158.5,612.1 L161.6,611.2 L164.5,610.1 L166.9,608.5 L169.2,606.7 L171.5,604.9 L174.1,602.9 L176.3,600.4 L178.5,597.9 L180.7,595.5 L183.1,593.3 L185.4,591.0 L187.9,588.8 L190.2,586.5 L192.4,584.0 L194.4,581.8 L196.1,579.5 L197.6,577.0 L199.0,574.4 L200.9,572.2 L202.9,570.1 L204.2,567.2 L205.2,564.3 L206.3,561.4 L207.7,558.5 L208.3,555.4 L209.8,552.6 L210.7,549.6 L211.8,546.7 L213.3,543.9 L214.4,541.6 L215.7,539.3 L216.8,537.0 L218.8,534.9 L220.0,532.1 L222.0,530.0 L223.6,527.7 L225.3,525.3 L226.7,522.8 L228.3,519.4 L229.3,515.8 L230.4,513.1 L231.9,510.6 L231.8,507.9 L231.0,505.4 L234.5,501.9 L231.0,500.1 L227.6,498.9 L224.1,498.4 L220.6,498.1 L217.1,498.4Z" fill="#f0f5fe"/>
<path d="M200.6,420.0 L200.1,422.6 L199.7,425.2 L202.2,427.9 L204.9,430.5 L207.5,433.1 L210.1,435.7 L211.2,439.3 L212.8,442.6 L213.3,445.6 L214.6,448.5 L215.4,451.4 L216.4,453.8 L218.1,455.8 L218.9,458.3 L220.5,460.7 L222.3,463.0 L224.1,465.3 L221,470 L214,471 L210,482 L203,484 L198,478 L192,470 L188,460 L187.5,448 L182.3,444.4 L180.5,437.4 L171.8,432 L166.6,429 L163,426 L168,423 L176,424 L185,421 L194,419Z" fill="#f0f5fe"/>
<path d="M154.9,346.3 L157.6,342.8 L164.5,341.1 L171.5,337.6 L178.5,335.0 L180.2,339.4 L182.0,344.6 L178.5,348.1 L173.2,349.8 L168.0,353.3 L161.0,353.6 L155.8,351.6Z" fill="#ecf2fc"/>
<path d="M221.1,472.3 L227.2,470.5 L231.6,477.5 L229.9,487.9 L223.8,491.4 L221.1,486.2Z" fill="#fff"/>
<g fill="none" stroke="#d7e3f5" stroke-width=".9" stroke-linejoin="round">
<path d="M141.9,313.2 L140.3,316.8 L139.0,320.5 L136.7,323.7 L136.7,327.3 L137.7,330.7 L138.4,334.1 L140.6,336.5 L141.9,339.4 L139.5,342.2 L136.7,344.6 L139.2,346.8 L141.4,349.1 L143.6,351.6 L143.3,355.2 L141.9,358.5 L139.2,360.5 L136.7,362.7 L134.9,365.5 L134.1,369.0 L133.2,372.5 L135.0,375.4 L137.2,378.0 L138.4,381.2 L137.8,384.3 L136.3,387.1 L134.9,389.9 L134.4,394.3 L133.2,398.6 L135.5,401.5 L138.4,403.8 L142.0,404.5 L145.6,405.5 L148.9,407.3 L152.1,407.1 L154.9,405.6 L158.8,406.5 L162.8,407.3 L160.7,410.1 L157.9,412.1 L155.9,415.1 L153.0,417.0 L150.6,419.5 L151.1,422.7 L152.5,425.5 L154.1,428.2 L157.4,430.1 L161.2,431.2 L164.5,433.1"/>
<path d="M148.9,313.2 L149.9,316.7 L150.6,320.2 L153.9,318.0 L157.6,316.7 L161.1,316.2 L164.5,315.0 L168.0,314.1 L171.5,313.2"/>
<path d="M187.2,313.2 L187.4,316.8 L188.6,320.2 L188.9,323.7 L193.3,324.2 L197.6,325.4 L196.3,329.7 L195.9,334.1 L199.0,337.3 L202.9,339.4 L204.2,342.7 L206.3,345.5"/>
<path d="M199.4,313.2 L198.5,316.2 L198.1,319.2 L197.7,322.3 L197.6,325.4"/>
<path d="M209.8,313.2 L208.1,318.5 L210.9,315.6 L214.2,313.2"/>
<path d="M66.1,382.9 L69.9,382.4 L73.6,381.6 L77.4,381.2 L77.4,377.6 L77.9,374.1 L79.2,370.7 L81.1,367.5 L83.3,364.4 L85.9,361.7 L87.9,358.5 L91.2,358.4 L94.2,357.0 L97.5,357.0 L100.6,356.4 L103.6,355.0 L106.4,353.4 L108.3,350.7 L110.6,348.5 L113.0,346.4 L115.7,344.6 L119.1,343.0 L122.6,341.9 L126.2,341.1 L129.8,340.1 L133.4,339.3 L136.7,337.6"/>
<path d="M103.6,355.0 L102.1,358.0 L101.5,361.3 L100.2,364.4 L99.0,367.4 L98.3,370.7 L99.3,374.1 L99.0,377.7 L99.1,381.3 L100.1,384.7 L98.4,388.0 L97.1,391.5 L96.2,395.1 L94.8,398.6 L95.9,402.0 L95.8,405.6 L97.1,409.0 L97.5,412.5 L96.5,415.6 L95.8,418.7 L96.0,421.9 L95.5,425.1 L94.8,428.2 L98.4,428.4 L101.8,427.7 L105.2,426.5 L108.8,426.5 L111.5,424.8 L114.4,423.7 L117.7,423.5 L120.6,422.2 L123.1,420.2 L126.2,419.5 L128.7,417.2 L131.1,414.7 L132.9,411.8 L134.9,409.0 L134.1,405.6 L133.8,402.1 L133.2,398.6"/>
<path d="M171.5,349.8 L171.6,352.9 L171.3,356.0 L169.6,358.9 L169.8,362.0 L172.0,364.5 L174.4,366.7 L176.7,369.0 L182.0,367.2"/>
<path d="M178.5,348.1 L179.1,351.2 L180.9,353.9 L182.0,356.8 L180.2,360.3"/>
<path d="M182.0,375.1 L179.1,376.2 L176.5,377.8 L174.3,380.0 L171.5,381.2 L168.8,383.8 L165.9,386.0 L162.8,388.1 L160.9,391.0 L158.4,393.3 L156.5,396.2 L154.1,398.6 L154.6,402.1 L154.9,405.6"/>
<path d="M66.1,396.9 L69.5,398.2 L72.2,400.9 L75.7,402.1 L75.3,405.6 L74.6,409.0 L73.9,412.5 L71.2,414.7 L68.3,416.7 L66.1,419.5"/>
<path d="M94.8,420.0 L94.9,423.5 L94.2,427.0 L94.8,430.5 L96.6,434.0 L98.3,437.5 L100.1,440.9 L101.2,444.4 L103.1,447.7 L103.6,451.4 L105.4,454.8 L107.0,458.3 L110.7,459.7 L114.3,461.2 L117.5,463.6 L120.6,464.7 L123.9,464.5 L126.9,465.6 L130.0,466.6 L133.2,467.0 L134.9,469.7 L136.7,472.3 L140.3,473.8 L143.6,475.8 L147.1,477.5 L150.6,479.3 L153.9,481.3 L157.6,482.7 L159.8,486.0 L161.0,489.7 L161.5,493.2 L162.5,496.6 L162.8,500.1 L165.8,501.0 L168.5,502.8 L171.5,503.6 L175.0,504.8 L178.5,506.0 L182.0,507.1 L185.3,509.2 L188.9,510.6"/>
<path d="M103.6,451.4 L100.1,451.0 L96.6,451.8 L93.1,451.7 L89.6,452.0 L86.1,452.2 L86.7,455.4 L87.0,458.6 L87.9,461.8 L87.4,465.3 L86.7,468.8 L86.1,472.3 L87.9,474.9 L89.1,477.8 L91.1,480.3 L93.1,482.7 L91.4,485.4 L90.2,488.3 L89.6,491.4 L86.2,492.2 L82.6,492.2 L79.1,492.1 L75.7,493.2 L74.1,496.5 L73.8,500.3 L72.2,503.6 L74.4,505.9 L75.8,508.8 L77.9,511.1 L79.2,514.1 L80.7,517.5 L82.0,520.8 L82.6,524.5 L79.0,526.0 L75.7,528.0 L73.8,525.1 L71.8,522.4 L68.8,520.5 L67.0,517.6"/>
<path d="M79.2,514.1 L82.0,512.3 L84.5,510.2 L86.7,507.6 L89.9,506.4 L92.6,504.4 L94.8,501.9 L98.0,501.8 L101.0,503.2 L104.2,502.8 L107.4,503.2 L110.5,503.6 L113.1,505.4 L116.1,506.4 L119.2,507.1 L122.6,506.1 L126.2,505.9 L129.7,505.4 L131.4,508.3 L133.4,511.1 L134.9,514.1 L137.8,512.8 L140.9,512.1 L144.1,511.8 L147.1,510.6 L150.4,508.8 L154.1,508.3 L157.6,507.1 L161.0,506.2 L164.5,505.4"/>
<path d="M134.9,514.1 L137.2,517.3 L138.6,520.9 L140.1,524.5 L138.8,527.9 L137.8,531.5 L136.7,535.0 L136.7,538.5 L134.8,541.6 L134.9,545.1"/>
<path d="M148.9,421.7 L151.5,424.3 L154.3,426.9 L157.6,428.7 L160.7,429.4 L163.5,430.7 L166.3,432.2 L166.0,435.9 L164.5,439.2 L161.0,439.7 L157.6,440.9 L156.7,443.9 L155.7,446.9 L154.1,449.6 L151.6,452.3 L148.9,454.8 L151.0,458.6 L154.1,461.8 L156.5,463.9 L159.3,465.3 L159.6,469.6 L159.3,474.0 L158.9,478.4 L157.6,482.7"/>
<path d="M66.1,470.5 L69.4,469.3 L72.2,467.0 L73.0,471.4 L73.9,475.7 L71.4,478.5 L69.8,481.9 L67.0,484.5 L66.1,489.7"/>
<path d="M82.6,530.0 L83.8,533.4 L83.5,537.0 L84.4,540.5 L82.1,542.9 L80.2,545.5 L77.4,547.4 L80.5,550.5 L84.4,552.6 L84.2,556.1 L84.0,559.6 L84.4,563.1 L82.5,565.8 L79.4,567.4 L77.4,570.1 L74.9,572.3 L71.5,573.1 L69.0,575.3 L66.1,577.0"/>
<path d="M84.4,563.1 L87.5,562.2 L90.7,561.8 L93.9,561.6 L96.9,560.0 L100.1,559.6 L103.9,561.8 L107.0,564.8 L107.0,568.3 L107.4,571.8 L107.0,575.3 L105.8,578.2 L103.6,580.5 L106.7,580.5 L109.7,580.8 L112.7,581.4 L115.7,582.3"/>
<path d="M138.4,530.0 L136.9,533.6 L135.2,537.1 L133.2,540.5 L134.6,544.1 L136.9,547.3 L138.4,550.9 L137.8,554.4 L137.7,558.0 L136.7,561.4 L138.0,564.2 L139.6,567.0 L140.1,570.1 L138.7,572.9 L136.7,575.3"/>
</g>
<rect x="65.5" y="312.5" width="1" height="371" fill="#eceef1"/>
<circle cx="165.8" cy="347.8" r="2.1" fill="#9aa6b8"/>
<path d="M165.8,346.4 L160.15,340.62 A7.9,7.9 0 1 1 171.45,340.62Z" fill="#fff" filter="url(#ps)"/>
<circle cx="165.8" cy="335.1" r="6.6" fill="url(#gb)"/>
<circle cx="194.0" cy="470.0" r="2.1" fill="#9aa6b8"/>
<path d="M194.0,467.9 L187.52,461.84 A9.5,9.5 0 1 1 200.48,461.84Z" fill="#fff" filter="url(#ps)"/>
<circle cx="194.0" cy="454.9" r="8.0" fill="url(#gb)"/>
<circle cx="200.1" cy="563.6" r="2.1" fill="#9aa6b8"/>
<path d="M200.1,561.8 L194.21,556.71 A9.0,9.0 0 1 1 205.99,556.71Z" fill="#fff" filter="url(#ps)"/>
<circle cx="200.1" cy="549.9" r="7.3" fill="url(#gb)"/>
<circle cx="129.2" cy="609.4" r="2.1" fill="#9aa6b8"/>
<path d="M129.2,607.7 L120.10,598.50 A12.8,12.8 0 1 1 138.30,598.50Z" fill="#fff" filter="url(#ps)"/>
<circle cx="129.2" cy="589.5" r="10.8" fill="url(#gb)"/>
<circle cx="209.2" cy="497.8" r="2.1" fill="#d9734a"/>
<path d="M209.2,495.4 L200.28,487.23 A13.2,13.2 0 1 1 218.12,487.23Z" fill="#fff" filter="url(#ps)"/>
<circle cx="209.2" cy="477.5" r="11.3" fill="url(#go)"/>
</g>
</svg>
<!-- ===== right AI panel ===== -->
<div class="abs" style="left:863px;top:71px;width:285px;height:647px;background:#fff"></div>
<div class="abs" style="left:863px;top:102.6px;width:285px;height:1px;background:#f0f1f4"></div>
<!-- robot -->
<svg class="abs" style="left:875px;top:75px" width="27" height="24" viewBox="0 0 27 24">
<defs><radialGradient id="rb" cx=".38" cy=".3" r=".75"><stop offset="0" stop-color="#ffffff"/><stop offset=".6" stop-color="#f1f3fa"/><stop offset="1" stop-color="#c9d2ea"/></radialGradient></defs>
<ellipse cx="3.7" cy="9.8" rx="2.8" ry="1.2" fill="#e9edf7" transform="rotate(-8 3.7 9.8)"/><ellipse cx="24.6" cy="10.9" rx="2.6" ry="1.2" fill="#e4e9f5" transform="rotate(18 24.6 10.9)"/>
<ellipse cx="14.2" cy="15.5" rx="8.5" ry="5" fill="#eef1f9"/>
<circle cx="5.6" cy="18.2" r="3.5" fill="url(#rb)"/><circle cx="21.6" cy="18.2" r="3.5" fill="url(#rb)"/><circle cx="10.2" cy="18.8" r="3.7" fill="url(#rb)"/><circle cx="16.2" cy="18.8" r="3.7" fill="url(#rb)"/>
<ellipse cx="14.8" cy="8.6" rx="7.6" ry="6.9" fill="url(#rb)"/>
<rect x="9" y="5.8" width="11.2" height="6" rx="3" fill="#1b2547"/><rect x="10.8" y="7.3" width="7.6" height="3" rx="1.3" fill="#34477a"/><rect x="11.2" y="7.5" width="1.3" height="2.6" rx=".6" fill="#7fb0e3"/><rect x="16.7" y="7.5" width="1.3" height="2.6" rx=".6" fill="#7fb0e3"/>
</svg>
<div class="t" style="left:925.3px;top:80.7px;font-size:11px;color:#2468e0;-webkit-text-stroke:.3px #2468e0">CEO看板</div>
<div class="abs" style="left:920.5px;top:97.9px;width:55px;height:1.9px;background:#2468e0"></div>
<div class="t" style="left:980.5px;top:80.7px;font-size:11.2px;color:#15181d;-webkit-text-stroke:.2px #15181d">企业智能问询中心</div>
<svg class="abs" style="left:1125.5px;top:83px" width="8" height="8"><path d="M0.6,0.6 L7.4,7.4 M7.4,0.6 L0.6,7.4" stroke="#5c6169" stroke-width=".9" fill="none"/></svg>
<!-- message -->
<svg class="abs" style="left:876px;top:116.2px" width="32" height="32" viewBox="0 0 32 32"><defs><clipPath id="av"><rect width="32" height="32" rx="7"/></clipPath></defs><g clip-path="url(#av)"><rect width="32" height="32" fill="#cbcbc9"/><path d="M7,16 Q6,3 16,2.4 Q25,3 24.4,15 Q24.6,18 23,18.5 L9,18.5 Q7,18 7,16Z" fill="#17120f"/><path d="M11.8,21 L11.8,27 L16,32.5 L20,27 L20,21Z" fill="#eecbb9"/><path d="M9.6,13 Q9.5,7 14,6.5 Q17,6 18.5,6.7 Q23,8 23.2,14 Q23.2,20 20,23 Q17,25.8 14.3,24.5 Q10,22 9.6,13Z" fill="#f4d8ca"/><path d="M18.2,5.4 Q12,6 9.3,14.5 Q8.2,8 13,4.2Z M18.2,5.4 Q22,7 23.5,14.5 Q24.3,7 19,3.9Z" fill="#17120f"/><ellipse cx="12.9" cy="14.7" rx="1.3" ry=".55" fill="#4a332c" opacity=".85"/><ellipse cx="19.4" cy="14.7" rx="1.3" ry=".55" fill="#4a332c" opacity=".85"/><path d="M12,13.1 Q13,12.6 14.3,13 M18,13 Q19.3,12.6 20.4,13.1" stroke="#5a4038" stroke-width=".5" fill="none" opacity=".7"/><path d="M13.8,21.2 Q16,20.6 18.3,21.2 Q16,23.3 13.8,21.2Z" fill="#cf2a23"/><path d="M1.5,32 L2,29.9 Q7,27 11.6,24.4 L14.2,32Z M30.5,32 L30,29.9 Q25,27 20.3,24.4 L17.8,32Z" fill="#121214"/></g></svg>
<div class="t" style="left:913.8px;top:120.9px;font-size:11.2px;color:#8f959e">财务主管</div>
<div class="abs" style="left:914px;top:137.2px;width:222.7px;height:46.2px;border-radius:8px;background:#f2f3f5"></div>
<div class="abs" style="left:927px;top:143.8px;width:205px;font-size:11.4px;line-height:16.7px;color:#1f2329;white-space:nowrap">会计期间:2024年下半年4季度12月,核<br>算账簿:运动时代杭州</div>
<svg class="abs" style="left:914px;top:190.1px" width="78.5" height="20.5"><rect x=".5" y=".5" width="77.5" height="19.5" rx="3" fill="#fff" stroke="#6896e6"/></svg><div class="chip" style="left:914px;top:190.1px;height:20.5px;width:78.5px">盈利能力指标</div>
<svg class="abs" style="left:914px;top:218.9px" width="78.5" height="20.5"><rect x=".5" y=".5" width="77.5" height="19.5" rx="3" fill="#fff" stroke="#6896e6"/></svg><div class="chip" style="left:914px;top:218.9px;height:20.5px;width:78.5px">营运能力指标</div>
<svg class="abs" style="left:914px;top:247.7px" width="78.5" height="20.5"><rect x=".5" y=".5" width="77.5" height="19.5" rx="3" fill="#fff" stroke="#6896e6"/></svg><div class="chip" style="left:914px;top:247.7px;height:20.5px;width:78.5px">偿债能力指标</div>
<svg class="abs" style="left:914px;top:276.4px" width="78.5" height="20.5"><rect x=".5" y=".5" width="77.5" height="19.5" rx="3" fill="#fff" stroke="#6896e6"/></svg><div class="chip" style="left:914px;top:276.4px;height:20.5px;width:78.5px">发展能力指标</div>
<svg class="abs" style="left:914px;top:305.3px" width="122.8" height="20.5"><rect x=".5" y=".5" width="121.8" height="19.5" rx="3" fill="#fff" stroke="#6896e6"/></svg><div class="chip" style="left:914px;top:305.3px;height:20.5px;width:122.8px">综合分析企业财务指标</div>
<!-- input area -->
<div class="abs" style="left:863px;top:565px;width:285px;height:2.8px;background:#e8e9ec"></div>
<svg class="abs" style="left:1001px;top:564.5px" width="12" height="3"><circle cx="1.5" cy="1.5" r=".8" fill="#5c6169"/><circle cx="6" cy="1.5" r=".8" fill="#5c6169"/><circle cx="10.5" cy="1.5" r=".8" fill="#5c6169"/></svg>
<div class="abs" style="left:869.3px;top:576.8px;width:98px;height:17.2px;border-radius:9px;background:#dbe7fb"></div>
<svg class="abs" style="left:879px;top:577.8px" width="15.6" height="15.6" viewBox="0 0 32 32"><rect width="32" height="32" fill="#cbcbc9"/><path d="M7,16 Q6,3 16,2.4 Q25,3 24.4,15 Q24.6,18 23,18.5 L9,18.5 Q7,18 7,16Z" fill="#17120f"/><path d="M11.8,21 L11.8,27 L16,32.5 L20,27 L20,21Z" fill="#eecbb9"/><path d="M9.6,13 Q9.5,7 14,6.5 Q17,6 18.5,6.7 Q23,8 23.2,14 Q23.2,20 20,23 Q17,25.8 14.3,24.5 Q10,22 9.6,13Z" fill="#f4d8ca"/><path d="M18.2,5.4 Q12,6 9.3,14.5 Q8.2,8 13,4.2Z M18.2,5.4 Q22,7 23.5,14.5 Q24.3,7 19,3.9Z" fill="#17120f"/><ellipse cx="12.9" cy="14.7" rx="1.3" ry=".55" fill="#4a332c" opacity=".85"/><ellipse cx="19.4" cy="14.7" rx="1.3" ry=".55" fill="#4a332c" opacity=".85"/><path d="M12,13.1 Q13,12.6 14.3,13 M18,13 Q19.3,12.6 20.4,13.1" stroke="#5a4038" stroke-width=".5" fill="none" opacity=".7"/><path d="M13.8,21.2 Q16,20.6 18.3,21.2 Q16,23.3 13.8,21.2Z" fill="#cf2a23"/><path d="M1.5,32 L2,29.9 Q7,27 11.6,24.4 L14.2,32Z M30.5,32 L30,29.9 Q25,27 20.3,24.4 L17.8,32Z" fill="#121214"/></svg>
<div class="t" style="left:898px;top:581px;font-size:11.2px;color:#2f6fd6">财务主管</div>
<svg class="abs" style="left:948.5px;top:583.5px" width="7" height="5"><path d="M0.8,0.8 L3.5,3.6 L6.2,0.8" stroke="#3c4452" stroke-width=".9" fill="none" stroke-linecap="round" stroke-linejoin="round"/></svg>
<div class="abs" style="left:977px;top:579.5px;width:1px;height:12px;background:#e1e3e8"></div>
<svg class="abs ic" style="left:987.5px;top:579px" width="13" height="13" viewBox="0 0 13 13"><path d="M6,1.2 H3.2 Q1,1.2 1,3.4 V6.8 Q1,9 3.2,9 V11.6 L6.2,9 H8"/><path d="M6,1.2 H9.8 Q12,1.2 12,3.4 V5"/><circle cx="4.4" cy="5.2" r=".6" fill="#2b2f36"/><circle cx="7" cy="5.2" r=".6" fill="#2b2f36"/><path d="M10,6.6 V10.6 M8,8.6 H12" stroke-width="1.2"/></svg>
<svg class="abs ic" style="left:1009.5px;top:579px" width="13" height="13" viewBox="0 0 13 13"><path d="M2.3,3.2 A5.4,5.4 0 1 1 1.2,7"/><path d="M0.8,1.6 L2.2,3.6 L4.4,2.8"/><path d="M6.5,3.6 V6.8 L8.8,8.6"/></svg>
<div class="abs" style="left:1032.3px;top:579.5px;width:1px;height:12px;background:#e1e3e8"></div>
<svg class="abs ic" style="left:1042.5px;top:579px" width="13" height="13" viewBox="0 0 13 13"><circle cx="6.5" cy="6.5" r="5.5"/><circle cx="4.6" cy="5.2" r=".6" fill="#2b2f36"/><circle cx="8.4" cy="5.2" r=".6" fill="#2b2f36"/><path d="M4,7.8 Q6.5,10.4 9,7.8"/></svg>
<svg class="abs ic" style="left:1065px;top:579.5px" width="12" height="12" viewBox="0 0 12 12"><path d="M5.2,1.6 H2.6 Q1,1.6 1,3.2 V9.4 Q1,11 2.6,11 H8.8 Q10.4,11 10.4,9.4 V7 M7.4,1 H11 V4.6 M11,1 L6.4,5.6"/></svg>
<div class="abs" style="left:869.3px;top:597.2px;width:274.2px;height:84.5px;border-radius:5px;background:#eff1f5"></div>
<div class="t" style="left:878.6px;top:602.8px;font-size:12.7px;color:#a5aab3">请输入</div>
<svg class="abs" style="left:869.5px;top:694.5px" width="10.4" height="10.4" viewBox="0 0 11 11"><circle cx="5.5" cy="5.5" r="4.7" fill="none" stroke="#8f959e" stroke-width=".9"/><path d="M5.5,3 V6.2" stroke="#8f959e" stroke-width="1"/><circle cx="5.5" cy="7.9" r=".65" fill="#8f959e"/></svg>
<svg class="abs" style="left:988.3px;top:695.6px" width="9.5" height="10" viewBox="0 0 9.5 10"><path d="M8,0.9 V6.7 H1.8 M4.2,4.2 L1.5,6.7 L4.2,9.3" fill="none" stroke="#8f959e" stroke-width="1.3" stroke-linejoin="round" stroke-linecap="round"/></svg>
<div class="t" style="left:1001.5px;top:695.5px;font-size:11.2px;color:#8f959e">发送</div>
<div class="t" style="left:1029.3px;top:695px;font-size:12.5px;color:#8f959e">/</div>
<div class="t" style="left:1039.5px;top:695.5px;font-size:11.2px;color:#8f959e">Shift</div>
<svg class="abs" style="left:1066.7px;top:695.6px" width="9.5" height="10" viewBox="0 0 9.5 10"><path d="M8,0.9 V6.7 H1.8 M4.2,4.2 L1.5,6.7 L4.2,9.3" fill="none" stroke="#8f959e" stroke-width="1.3" stroke-linejoin="round" stroke-linecap="round"/></svg>
<div class="t" style="left:1079.5px;top:695.5px;font-size:11.2px;color:#8f959e">换行</div>
<div class="abs" style="left:1109px;top:689.3px;width:34.5px;height:24.3px;border-radius:12.2px;background:#d6e4fb"></div>
<svg class="abs" style="left:1118.5px;top:694.5px" width="14" height="13" viewBox="0 0 14 13"><path d="M12.8,1 L1,5.8 L5.2,7.6 L6.8,12 Z M12.8,1 L5.2,7.6" fill="none" stroke="#fff" stroke-width="1.1" stroke-linejoin="round"/></svg>
<svg class="abs" style="left:688px;top:657px" width="7" height="11" viewBox="0 0 7 11"><path d="M0,0 L0,7.8 L1.8,6.2 L3.4,10 L5,9.3 L3.4,5.6 L5.9,5.6Z" fill="#0b0b0c" stroke="#fff" stroke-width=".7" stroke-linejoin="round"/></svg>
</div></body>
</html>
